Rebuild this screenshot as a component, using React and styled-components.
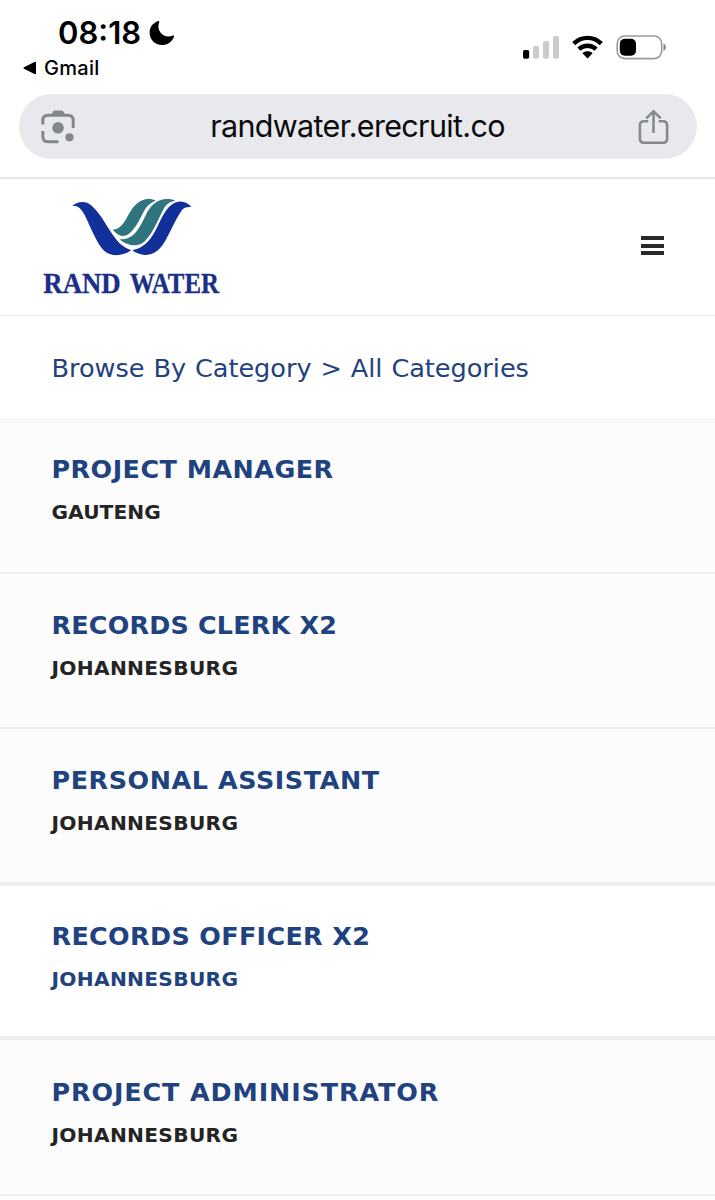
import React from "react";
import styled, { createGlobalStyle } from "styled-components";

const GlobalStyle = createGlobalStyle`
  * { box-sizing: border-box; }
  body { margin: 0; background: #fff; }
`;

const Screen = styled.div`
  width: 715px;
  height: 1200px;
  overflow: hidden;
  background: #fff;
  display: flex;
  flex-direction: column;
  font-family: "DejaVu Sans", Verdana, sans-serif;
`;

const StatusBar = styled.div`
  height: 94px;
  flex: none;
  display: flex;
  justify-content: space-between;
  padding: 16px 48px 0 23px;
  font-family: Inter, "Liberation Sans", sans-serif;
  color: #000;
`;

const StatusLeft = styled.div`
  display: flex;
  flex-direction: column;
`;

const ClockRow = styled.div`
  display: flex;
  align-items: center;
  gap: 8px;
  height: 34px;
  padding-left: 35px;
`;

const Clock = styled.span`
  font-size: 31px;
  line-height: 34px;
  font-weight: 600;
  white-space: nowrap;
`;

const BackRow = styled.div`
  display: flex;
  align-items: center;
  gap: 7px;
  height: 36px;
`;

const BackLabel = styled.span`
  font-size: 20px;
  line-height: 36px;
  font-weight: 450;
  letter-spacing: 0.3px;
`;

const StatusIcons = styled.div`
  display: flex;
  align-items: flex-start;
  padding-top: 19px;
  gap: 13px;
`;

const AddressBar = styled.div`
  height: 65px;
  flex: none;
  margin: 0 18px 18px 19px;
  padding: 0 28px 0 21px;
  border-radius: 33px;
  background: #e8e9ed;
  display: flex;
  align-items: center;
  justify-content: space-between;
`;

const Url = styled.span`
  font-family: Inter, "Liberation Sans", sans-serif;
  font-size: 30.5px;
  line-height: 40px;
  letter-spacing: -0.66px;
  padding: 0 0 2px 1px;
  color: #0b0b0d;
`;

const SiteHeader = styled.header`
  height: 139px;
  flex: none;
  border-top: 2px solid #e7e7e7;
  border-bottom: 1px solid #e3e3e3;
  padding: 17px 51px 0 42px;
  display: flex;
  justify-content: space-between;
  align-items: flex-start;
`;

const MenuButton = styled.button`
  border: 0;
  padding: 0;
  background: none;
  margin-top: 40px;
  display: flex;
  flex-direction: column;
  gap: 3.5px;
`;

const MenuLine = styled.span`
  width: 23px;
  height: 4px;
  background: #2a2a2a;
`;

const Breadcrumb = styled.nav`
  height: 102px;
  flex: none;
  padding: 36px 0 0 51.5px;
  font-size: 25.6px;
  line-height: 32px;
  letter-spacing: -0.05px;
  word-spacing: 0.9px;
  color: #22427e;
  white-space: nowrap;
`;

const JobList = styled.main`
  flex: 1;
  background: linear-gradient(#f4f4f4, #fcfcfc 9px);
`;

const JobRow = styled.article`
  height: ${(p) => p.$height}px;
  padding: ${(p) => p.$top}px 0 0 51.5px;
  border-bottom: ${(p) => p.$line}px solid #efefef;
  background: ${(p) => (p.$active ? "#fff" : "transparent")};
`;

const JobTitle = styled.h2`
  margin: 0;
  font-size: 25.4px;
  line-height: 32px;
  font-weight: 700;
  letter-spacing: ${(p) => p.$spacing}px;
  color: #20427f;
  white-space: nowrap;
`;

const JobPlace = styled.p`
  margin: 13px 0 0;
  font-size: 20.2px;
  line-height: 28px;
  font-weight: 700;
  letter-spacing: ${(p) => p.$spacing}px;
  color: ${(p) => (p.$active ? "#20427f" : "#242424")};
`;

const jobs = [
  { title: "PROJECT MANAGER", place: "GAUTENG", height: 156, top: 35, line: 2, ts: 0.48, ps: 0.05 },
  { title: "RECORDS CLERK X2", place: "JOHANNESBURG", height: 155, top: 35, line: 2, ts: 0.2, ps: 0.3 },
  { title: "PERSONAL ASSISTANT", place: "JOHANNESBURG", height: 157, top: 35, line: 4, ts: 0.58, ps: 0.3 },
  { title: "RECORDS OFFICER X2", place: "JOHANNESBURG", height: 154, top: 34, line: 4, ts: 0.36, ps: 0.3, active: true },
  { title: "PROJECT ADMINISTRATOR", place: "JOHANNESBURG", height: 156, top: 36, line: 2, ts: 0.9, ps: 0.3 },
];

const Moon = () => (
  <svg width="26" height="26" viewBox="0 0 26 26">
    <path d="M9.3 1 C3.8 3 .6 7.2 .6 12.5 C.6 19.5 6 25 13 25 C18.6 25 23.3 21.8 25 16.4 C25.2 15.6 24.6 15.2 23.9 15.6 C15.6 19.1 6.6 11.5 10.2 1.9 C10.5 1.2 10 .8 9.3 1Z" />
  </svg>
);

const Signal = () => (
  <svg width="36" height="24" viewBox="0 0 36 24">
    <rect x="0" y="15" width="6.2" height="8.7" rx="1.8" />
    <g fill="#cbcbcb">
      <rect x="10" y="11" width="6" height="12.7" rx="2" />
      <rect x="20" y="6" width="6" height="17.7" rx="2" />
      <rect x="30" y="1" width="6" height="22.7" rx="2" />
    </g>
  </svg>
);

const Wifi = () => (
  <svg width="31" height="24" viewBox="0 0 31 24">
    <g fill="none" stroke="#000" strokeWidth="4.4">
      <path d="M1.7 8.6 C9.5 .9 21.5 .9 29.3 8.6" />
      <path d="M6.9 14.2 C11.8 9.6 19.2 9.6 24.1 14.2" />
    </g>
    <path d="M10.4 18.2 C13.4 15.6 17.6 15.6 20.6 18.2 L15.5 23.4Z" />
  </svg>
);

const Battery = () => (
  <svg width="51" height="25" viewBox="0 0 51 25">
    <rect x="1.2" y="1" width="44.5" height="22.6" rx="7.5" fill="none" stroke="#999" strokeWidth="1.6" />
    <rect x="3.8" y="3.7" width="16.2" height="17" rx="5" />
    <path d="M47.5 8.6 C50.8 10 50.8 14.6 47.5 16Z" fill="#888" />
  </svg>
);

const LensIcon = () => (
  <svg width="36" height="36" viewBox="0 0 36 36" fill="none" stroke="#82888e" strokeWidth="3">
    <path d="M2.8 15.5V11.5Q2.8 6.3 8 6.3H28Q33.2 6.3 33.2 11.5V19" />
    <path d="M2.8 22V27.5Q2.8 32.8 8 32.8H18.5" />
    <path d="M10.5 6Q12.2 5.4 12.5 3.6Q13.1 1.5 15 1.5H21.5Q23.4 1.5 24 3.6Q24.3 5.4 26 6Z" fill="#82888e" stroke="none" />
    <circle cx="18" cy="18.8" r="5.8" fill="#82888e" stroke="none" />
    <circle cx="29.5" cy="28.3" r="4.1" fill="#82888e" stroke="none" />
  </svg>
);

const ShareIcon = () => (
  <svg width="31" height="36" viewBox="0 0 31 36" fill="none" stroke="#858a8f" strokeWidth="2.6">
    <path d="M10.3 12.3H6Q1.9 12.3 1.9 16.5V29.5Q1.9 33.8 6 33.8H25Q29.1 33.8 29.1 29.5V16.5Q29.1 12.3 25 12.3H20.7" />
    <path d="M15.5 23V2.5M9 8.6L15.5 2.2L22 8.6" strokeLinecap="round" />
  </svg>
);

const LogoSvg = styled.svg`
  overflow: visible;
`;

const WordMark = styled.text`
  font-family: "Liberation Serif", serif;
  font-weight: 700;
  font-size: 87px;
  fill: #1a2f86;
  stroke: #1a2f86;
  stroke-width: 1px;
`;

const Logo = () => (
  <LogoSvg width="200" height="116" viewBox="66 63 600 348">
    <g fill="#12309a">
      <path d="M157 93C172 80 195 75 215 92C245 118 262 160 290 195C302 210 318 221 334 225C320 237 300 242 280 240C248 236 235 205 222 180C205 147 193 105 173 95C168 93 162 93 157 93Z" />
      <path d="M514 96C500 95 492 97 486 105C465 135 450 175 430 207C415 230 395 241 373 240C358 239 346 233 337 226C375 218 395 190 412 155C428 120 445 85 475 80C492 78 505 85 514 96Z" />
    </g>
    <g fill="#2f7580">
      <path d="M407 77C395 82 385 88 377 100C362 125 350 160 325 178C315 185 305 184 297 180C290 176 284 170 278 164C300 163 312 145 325 120C340 92 360 72 385 72C395 72 402 74 407 77Z" />
      <path d="M466 78C450 79 440 87 432 100C415 130 403 170 375 198C362 211 345 213 330 209C317 206 306 200 299 193C340 194 355 165 375 125C390 92 410 72 442 72C452 72 460 74 466 78Z" />
    </g>
    <WordMark x="70" y="354" textLength="232" lengthAdjust="spacingAndGlyphs">RAND</WordMark>
    <WordMark x="329" y="354" textLength="268" lengthAdjust="spacingAndGlyphs">WATER</WordMark>
  </LogoSvg>
);

export default function App() {
  return (
    <Screen>
      <GlobalStyle />
      <StatusBar>
        <StatusLeft>
          <ClockRow>
            <Clock>08:18</Clock>
            <Moon />
          </ClockRow>
          <BackRow>
            <svg width="14" height="14" viewBox="0 0 14 14">
              <path d="M1 6.2L11.5 .9Q13 .3 13 2V12Q13 13.7 11.5 13.1L1 7.8Q-.2 7 1 6.2Z" />
            </svg>
            <BackLabel>Gmail</BackLabel>
          </BackRow>
        </StatusLeft>
        <StatusIcons>
          <Signal />
          <Wifi />
          <Battery />
        </StatusIcons>
      </StatusBar>
      <AddressBar>
        <LensIcon />
        <Url>randwater.erecruit.co</Url>
        <ShareIcon />
      </AddressBar>
      <SiteHeader>
        <Logo />
        <MenuButton aria-label="Menu">
          <MenuLine />
          <MenuLine />
          <MenuLine />
        </MenuButton>
      </SiteHeader>
      <Breadcrumb>Browse By Category &gt; All Categories</Breadcrumb>
      <JobList>
        {jobs.map((job) => (
          <JobRow key={job.title} $height={job.height} $top={job.top} $line={job.line} $active={job.active}>
            <JobTitle $spacing={job.ts}>{job.title}</JobTitle>
            <JobPlace $spacing={job.ps} $active={job.active}>{job.place}</JobPlace>
          </JobRow>
        ))}
      </JobList>
    </Screen>
  );
}
